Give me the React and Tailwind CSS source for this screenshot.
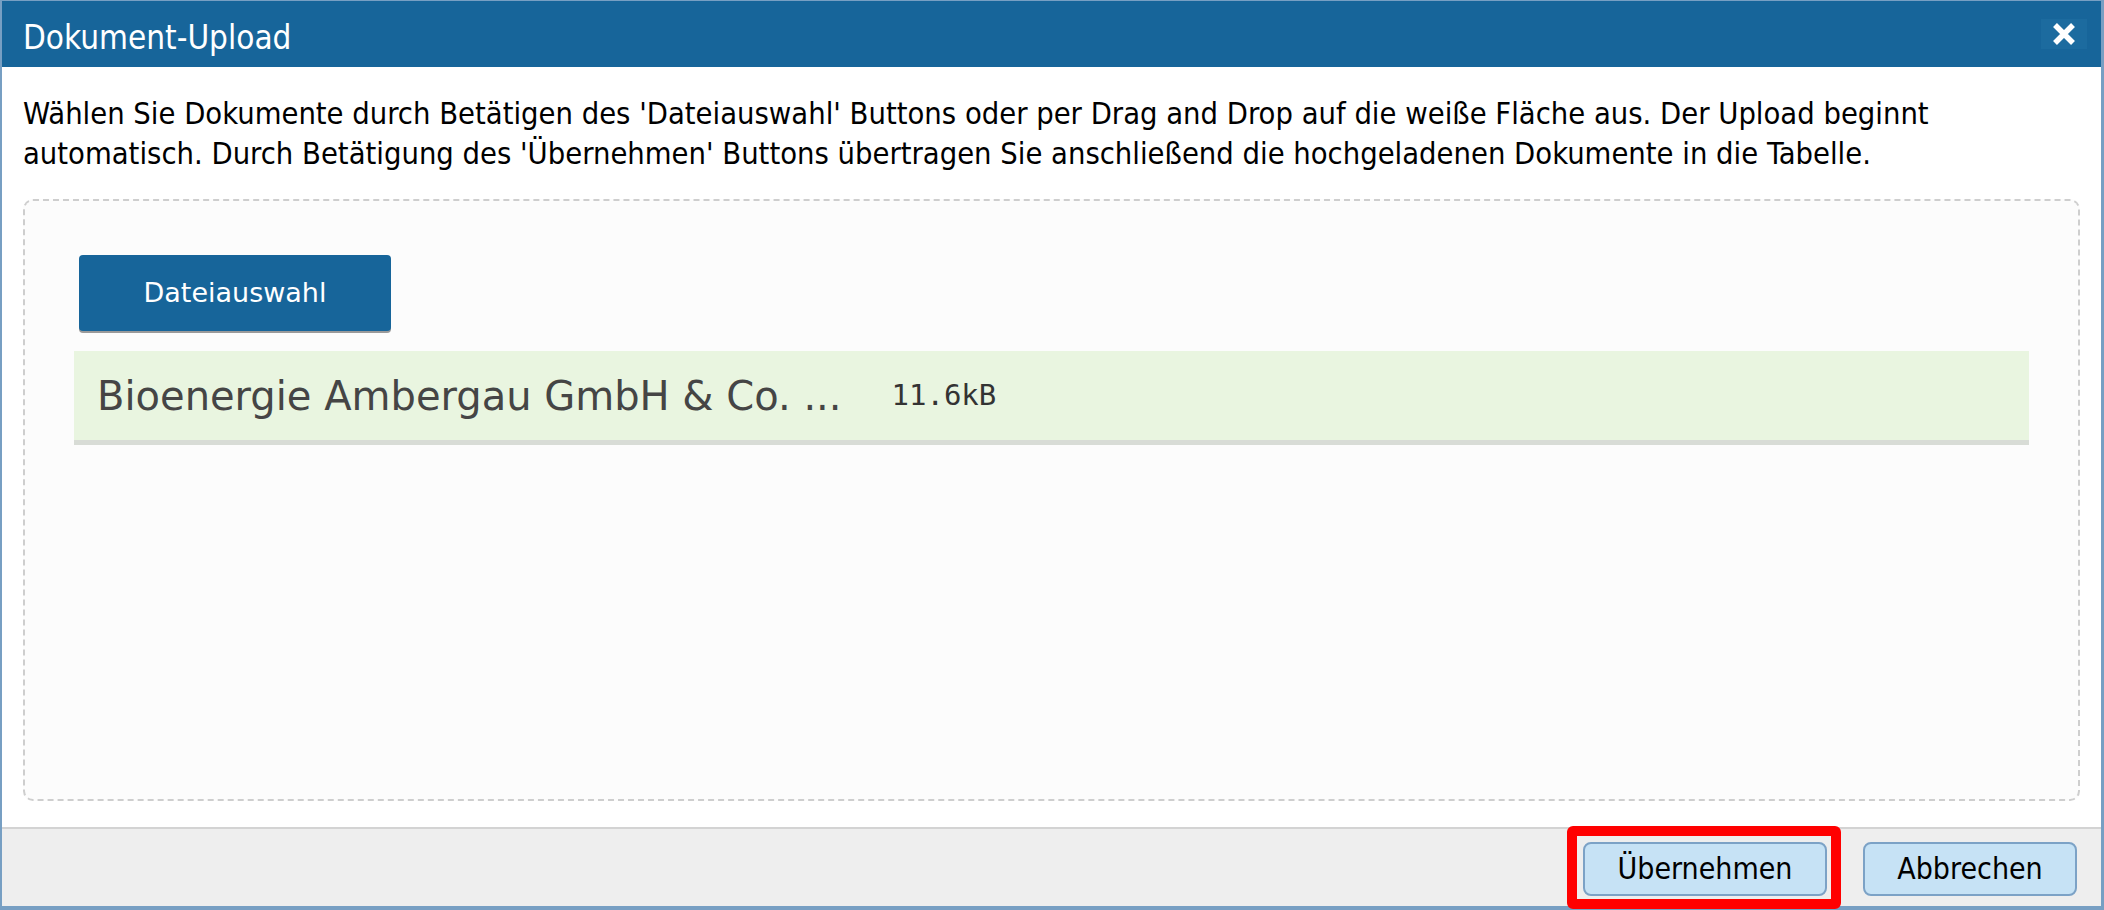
import React from 'react';

const tahoma = "font-['DejaVu_Sans_Condensed','DejaVu_Sans',sans-serif]";

function CloseIcon() {
  return (
    <svg width="24" height="22" viewBox="0 0 24 22" aria-hidden="true">
      <path d="M3 2 L21 20 M21 2 L3 20" stroke="#ffffff" strokeWidth="5.5" strokeLinecap="butt" />
    </svg>
  );
}

export default function App() {
  return (
    <div className={`w-[2104px] h-[910px] flex flex-col bg-white border-[#779fc3] border-t border-l-2 border-r-[3px] border-b-[4px] ${tahoma}`}>
      <div className="h-[66px] shrink-0 bg-[#17659a] flex items-center justify-between pl-[21px] pr-[14px]">
        <h1 className="text-white text-[33px] leading-none pt-[6px]">Dokument-Upload</h1>
        <button className="w-[46px] h-[30px] flex items-center justify-center bg-[#1c6b9f]">
          <CloseIcon />
        </button>
      </div>

      <div className="flex-1 flex flex-col px-[21px] pt-[27px] pb-[26px]">
        <p className="text-[30.6px] leading-[40px] text-black pr-[60px]">
          Wählen Sie Dokumente durch Betätigen des 'Dateiauswahl' Buttons oder per Drag and Drop auf die weiße Fläche aus. Der Upload beginnt automatisch. Durch Betätigung des 'Übernehmen' Buttons übertragen Sie anschließend die hochgeladenen Dokumente in die Tabelle.
        </p>

        <div className="flex-1 mt-[25px] border-2 border-dashed border-[#cecece] rounded-[10px] bg-[#fcfcfc] pt-[54px] px-[49px]">
          <button className="ml-[5px] w-[312px] h-[76px] rounded-[4px] bg-[#17659a] text-white text-[27px] font-['DejaVu_Sans',sans-serif] shadow-[0_2px_0_#9a9a9a]">
            Dateiauswahl
          </button>
          <div className="mt-[20px] h-[94px] bg-[#e9f5e0] border-b-[5px] border-[#d8dcd6] flex items-center pl-[23px]">
            <span className="text-[40px] text-[#454545] font-['DejaVu_Sans',sans-serif]">Bioenergie Ambergau GmbH &amp; Co. ...</span>
            <span className="ml-[50px] text-[29px] text-[#333333] font-['DejaVu_Sans_Mono',monospace]">11.6kB</span>
          </div>
        </div>
      </div>

      <div className="h-[79px] shrink-0 bg-[#eeeeee] border-t-2 border-[#d3d3d3] flex items-start justify-end gap-[36px] pt-[13px] pr-[24px]">
        <div className="relative">
          <button className="w-[244px] h-[54px] rounded-[8px] border-2 border-[#7ca2c6] bg-[#c6e2f5] text-black text-[30px] leading-none">
            Übernehmen
          </button>
          <div className="absolute -left-[16px] -right-[14px] -top-[16px] -bottom-[13px] border-[10px] border-[#ff0000] rounded-[6px] pointer-events-none" />
        </div>
        <button className="w-[214px] h-[54px] rounded-[8px] border-2 border-[#7ca2c6] bg-[#c6e2f5] text-black text-[30px] leading-none">
          Abbrechen
        </button>
      </div>
    </div>
  );
}
